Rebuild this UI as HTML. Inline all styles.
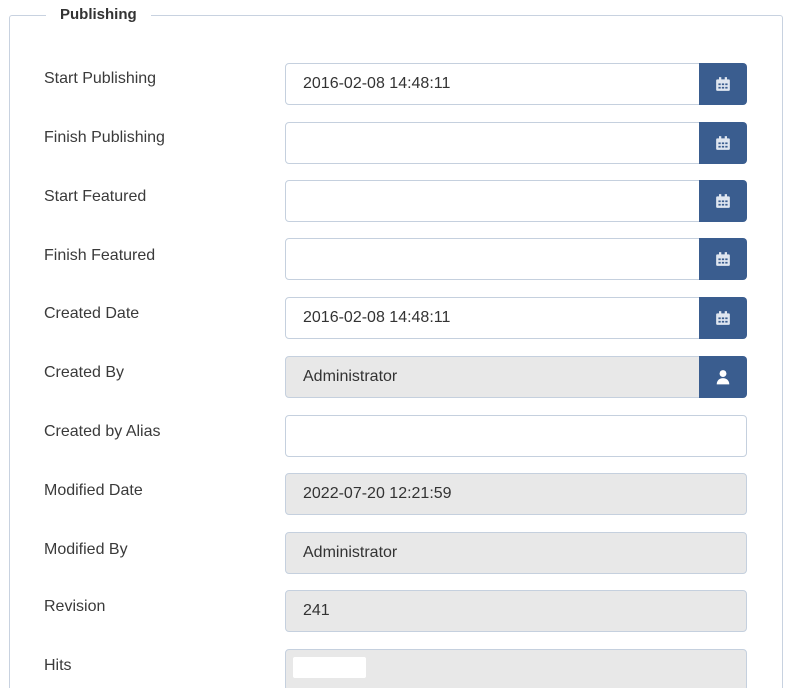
<!DOCTYPE html>
<html><head><style>
html,body{margin:0;width:790px;height:688px;overflow:hidden;background:#fff;font-family:"Liberation Sans",sans-serif;color:#333;}
#w{position:relative;width:790px;height:688px;overflow:hidden;}
.fs{position:absolute;left:9px;top:15px;width:772px;height:700px;border:1px solid #c8d2e0;border-radius:3px;}
.lg{position:absolute;left:46px;top:6px;padding:0 14px;background:#fff;font-size:15px;font-weight:bold;color:#333;}
.lab{position:absolute;left:44px;font-size:16px;color:#3a3a3a;}
.in{position:absolute;left:285px;width:460px;height:40px;border:1px solid #c5d0de;border-radius:4px;box-sizing:content-box;font-size:16px;line-height:40px;padding:0;color:#333;}
.in span{margin-left:17px;}
.g{background:#e8e8e8;}
.btn{position:absolute;left:699px;width:48px;height:42px;background:#3a5d8f;border-radius:0 4px 4px 0;}
.btn svg{position:absolute;left:16px;top:13px;}
</style></head><body><div id="w">
<div class="fs"></div>
<div class="lg">Publishing</div>

<div class="lab" style="top:70px">Start Publishing</div>
<div class="in" style="top:63px;width:414px;border-radius:4px 0 0 4px"><span>2016-02-08 14:48:11</span></div>
<div class="btn" style="top:63px"><svg width="16" height="16" viewBox="0 0 14 14"><rect x="1" y="3" width="12" height="10" rx="1" fill="#dfe6f0"/><rect x="3.5" y="1" width="2" height="3" fill="#dfe6f0"/><rect x="8.5" y="1" width="2" height="3" fill="#dfe6f0"/><g fill="#3a5d8f"><rect x="3" y="6.5" width="2" height="1.5"/><rect x="6" y="6.5" width="2" height="1.5"/><rect x="9" y="6.5" width="2" height="1.5"/><rect x="3" y="9.5" width="2" height="1.5"/><rect x="6" y="9.5" width="2" height="1.5"/><rect x="9" y="9.5" width="2" height="1.5"/></g></svg></div>

<div class="lab" style="top:129px">Finish Publishing</div>
<div class="in" style="top:122px;width:414px;border-radius:4px 0 0 4px"></div>
<div class="btn" style="top:122px"><svg width="16" height="16" viewBox="0 0 14 14"><rect x="1" y="3" width="12" height="10" rx="1" fill="#dfe6f0"/><rect x="3.5" y="1" width="2" height="3" fill="#dfe6f0"/><rect x="8.5" y="1" width="2" height="3" fill="#dfe6f0"/><g fill="#3a5d8f"><rect x="3" y="6.5" width="2" height="1.5"/><rect x="6" y="6.5" width="2" height="1.5"/><rect x="9" y="6.5" width="2" height="1.5"/><rect x="3" y="9.5" width="2" height="1.5"/><rect x="6" y="9.5" width="2" height="1.5"/><rect x="9" y="9.5" width="2" height="1.5"/></g></svg></div>

<div class="lab" style="top:188px">Start Featured</div>
<div class="in" style="top:180px;width:414px;border-radius:4px 0 0 4px"></div>
<div class="btn" style="top:180px"><svg width="16" height="16" viewBox="0 0 14 14"><rect x="1" y="3" width="12" height="10" rx="1" fill="#dfe6f0"/><rect x="3.5" y="1" width="2" height="3" fill="#dfe6f0"/><rect x="8.5" y="1" width="2" height="3" fill="#dfe6f0"/><g fill="#3a5d8f"><rect x="3" y="6.5" width="2" height="1.5"/><rect x="6" y="6.5" width="2" height="1.5"/><rect x="9" y="6.5" width="2" height="1.5"/><rect x="3" y="9.5" width="2" height="1.5"/><rect x="6" y="9.5" width="2" height="1.5"/><rect x="9" y="9.5" width="2" height="1.5"/></g></svg></div>

<div class="lab" style="top:247px">Finish Featured</div>
<div class="in" style="top:238px;width:414px;border-radius:4px 0 0 4px"></div>
<div class="btn" style="top:238px"><svg width="16" height="16" viewBox="0 0 14 14"><rect x="1" y="3" width="12" height="10" rx="1" fill="#dfe6f0"/><rect x="3.5" y="1" width="2" height="3" fill="#dfe6f0"/><rect x="8.5" y="1" width="2" height="3" fill="#dfe6f0"/><g fill="#3a5d8f"><rect x="3" y="6.5" width="2" height="1.5"/><rect x="6" y="6.5" width="2" height="1.5"/><rect x="9" y="6.5" width="2" height="1.5"/><rect x="3" y="9.5" width="2" height="1.5"/><rect x="6" y="9.5" width="2" height="1.5"/><rect x="9" y="9.5" width="2" height="1.5"/></g></svg></div>

<div class="lab" style="top:305px">Created Date</div>
<div class="in" style="top:297px;width:414px;border-radius:4px 0 0 4px"><span>2016-02-08 14:48:11</span></div>
<div class="btn" style="top:297px"><svg width="16" height="16" viewBox="0 0 14 14"><rect x="1" y="3" width="12" height="10" rx="1" fill="#dfe6f0"/><rect x="3.5" y="1" width="2" height="3" fill="#dfe6f0"/><rect x="8.5" y="1" width="2" height="3" fill="#dfe6f0"/><g fill="#3a5d8f"><rect x="3" y="6.5" width="2" height="1.5"/><rect x="6" y="6.5" width="2" height="1.5"/><rect x="9" y="6.5" width="2" height="1.5"/><rect x="3" y="9.5" width="2" height="1.5"/><rect x="6" y="9.5" width="2" height="1.5"/><rect x="9" y="9.5" width="2" height="1.5"/></g></svg></div>

<div class="lab" style="top:364px">Created By</div>
<div class="in g" style="top:356px;width:414px;border-radius:4px 0 0 4px"><span>Administrator</span></div>
<div class="btn" style="top:356px"><svg width="16" height="16" viewBox="0 0 14 14"><circle cx="7" cy="4" r="3" fill="#fff"/><path d="M1.5 13.5c0-3.5 2.5-5.5 5.5-5.5s5.5 2 5.5 5.5z" fill="#fff"/></svg></div>

<div class="lab" style="top:423px">Created by Alias</div>
<div class="in" style="top:415px"></div>

<div class="lab" style="top:482px">Modified Date</div>
<div class="in g" style="top:473px"><span>2022-07-20 12:21:59</span></div>

<div class="lab" style="top:541px">Modified By</div>
<div class="in g" style="top:532px"><span>Administrator</span></div>

<div class="lab" style="top:598px">Revision</div>
<div class="in g" style="top:590px"><span>241</span></div>

<div class="lab" style="top:657px">Hits</div>
<div class="in g" style="top:649px"><div style="position:absolute;left:7px;top:7px;width:73px;height:21px;background:#fff;border-radius:2px"></div></div>
</div></body></html>
